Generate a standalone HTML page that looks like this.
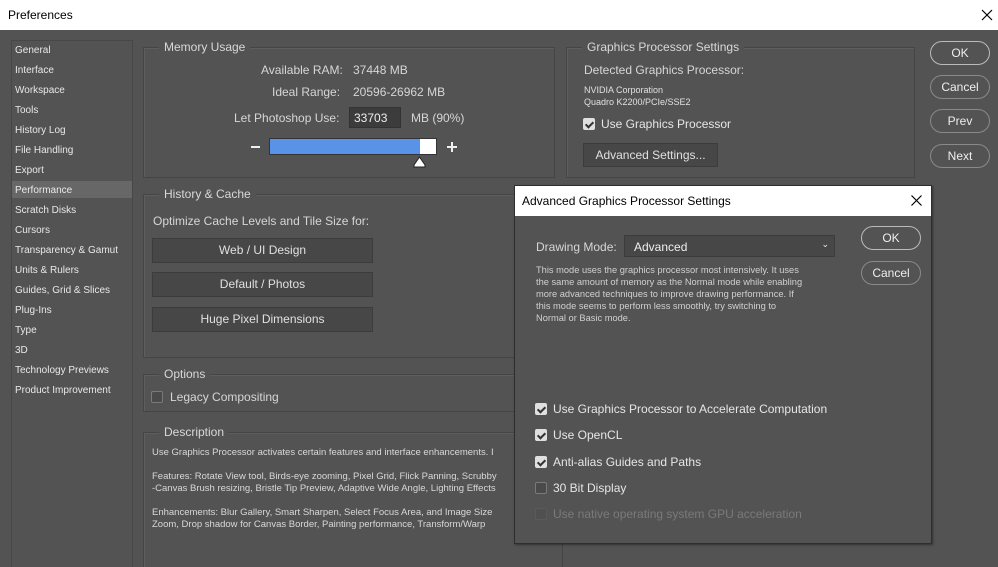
<!DOCTYPE html>
<html><head><style>
*{margin:0;padding:0;box-sizing:border-box}
html{width:998px;height:567px;overflow:hidden}
body{width:998px;height:567px;background:#535353;font-family:"Liberation Sans",sans-serif;color:#d6d6d6;position:relative;overflow:hidden}
.a{position:absolute;white-space:nowrap}
.tb{position:absolute;left:0;top:0;width:998px;height:30px;background:#fff;color:#000;font-size:12px}
.side{position:absolute;left:11px;top:40px;width:122px;height:530px;border:1px solid #474747;background:#535353}
.side div{position:absolute;left:3px;font-size:10px;color:#e8e8e8}
.grp{position:absolute;border:1px solid #454545;box-shadow:inset 1px 1px 0 #5e5e5e}
.lg{position:absolute;top:-8px;left:15px;background:#535353;padding:0 5px;font-size:12px;color:#d8d8d8}
.btn{position:absolute;width:60px;height:24px;border:1px solid #8a8a8a;border-radius:12px;text-align:center;line-height:22px;font-size:12px;color:#eee}
.gb{position:absolute;background:#474747;border:1px solid #3c3c3c;text-align:center;font-size:12px;color:#e0e0e0;line-height:22px}
.cb{position:absolute;width:12px;height:12px;border-radius:2px;border:1px solid #7a7a7a;background:#4a4a4a}
.cb.on{background:#e0e0e0;border-color:#e0e0e0}
.cb.on:after{content:"";position:absolute;left:3px;top:1px;width:3px;height:6px;border:solid #333;border-width:0 2px 2px 0;transform:rotate(45deg)}
</style></head><body>
<div class="tb"><span class="a" style="left:8px;top:8px">Preferences</span>
<svg class="a" style="left:981px;top:9px" width="12" height="12"><path d="M1 1L11 11M11 1L1 11" stroke="#000" stroke-width="1.2"/></svg></div>
<div class="side">
<div style="left:0;top:140px;width:120px;height:17px;background:#676767"></div>
<div style="top:4px">General</div><div style="top:24px">Interface</div><div style="top:44px">Workspace</div><div style="top:64px">Tools</div><div style="top:84px">History Log</div><div style="top:104px">File Handling</div><div style="top:124px">Export</div><div style="top:144px">Performance</div><div style="top:164px">Scratch Disks</div><div style="top:184px">Cursors</div><div style="top:204px">Transparency &amp; Gamut</div><div style="top:224px">Units &amp; Rulers</div><div style="top:244px">Guides, Grid &amp; Slices</div><div style="top:264px">Plug-Ins</div><div style="top:284px">Type</div><div style="top:304px">3D</div><div style="top:324px">Technology Previews</div><div style="top:344px">Product Improvement</div>
</div>

<div class="grp" style="left:143px;top:47px;width:412px;height:131px"><span class="lg">Memory Usage</span></div>
<span class="a" style="left:261px;top:63px;font-size:12px">Available RAM:</span><span class="a" style="left:353px;top:63px;font-size:12px">37448 MB</span>
<span class="a" style="left:272px;top:85px;font-size:12px">Ideal Range:</span><span class="a" style="left:353px;top:85px;font-size:12px">20596-26962 MB</span>
<span class="a" style="left:234px;top:111px;font-size:12px">Let Photoshop Use:</span>
<div class="a" style="left:349px;top:107px;width:52px;height:21px;background:#3c3c3c;border:1px solid #333;font-size:12px;padding:3px 4px;color:#eee">33703</div>
<span class="a" style="left:411px;top:111px;font-size:12px">MB (90%)</span>
<div class="a" style="left:251px;top:146px;width:9px;height:2px;background:#eee"></div>
<div class="a" style="left:269px;top:138px;width:168px;height:17px;background:#fff;border:1px solid #333"><div style="width:150px;height:15px;background:#5893e8"></div></div>
<div class="a" style="left:447px;top:146px;width:10px;height:2px;background:#eee"></div><div class="a" style="left:451px;top:142px;width:2px;height:10px;background:#eee"></div>
<svg class="a" style="left:413px;top:156px" width="13" height="12"><path d="M6.5 1L12 9V11H1V9Z" fill="#fff" stroke="#222"/></svg>

<div class="grp" style="left:566px;top:47px;width:349px;height:131px"><span class="lg">Graphics Processor Settings</span></div>
<span class="a" style="left:584px;top:63px;font-size:12px">Detected Graphics Processor:</span>
<span class="a" style="left:584px;top:85px;font-size:9px;color:#e0e0e0">NVIDIA Corporation</span>
<span class="a" style="left:584px;top:97px;font-size:9px;color:#e0e0e0">Quadro K2200/PCIe/SSE2</span>
<div class="cb on" style="left:583px;top:118px"></div><span class="a" style="left:601px;top:117px;font-size:12px;color:#e6e6e6">Use Graphics Processor</span>
<div class="gb" style="left:583px;top:143px;width:135px;height:24px">Advanced Settings...</div>

<div class="btn" style="left:930px;top:41px;border-color:#bbb">OK</div>
<div class="btn" style="left:930px;top:75px">Cancel</div>
<div class="btn" style="left:930px;top:109px">Prev</div>
<div class="btn" style="left:930px;top:144px">Next</div>

<div class="grp" style="left:143px;top:194px;width:420px;height:164px"><span class="lg">History &amp; Cache</span></div>
<span class="a" style="left:153px;top:214px;font-size:12px">Optimize Cache Levels and Tile Size for:</span>
<div class="gb" style="left:152px;top:238px;width:221px;height:25px">Web / UI Design</div>
<div class="gb" style="left:152px;top:272px;width:221px;height:25px">Default / Photos</div>
<div class="gb" style="left:152px;top:307px;width:221px;height:25px">Huge Pixel Dimensions</div>

<div class="grp" style="left:143px;top:374px;width:420px;height:38px"><span class="lg">Options</span></div>
<div class="cb" style="left:151px;top:391px"></div><span class="a" style="left:170px;top:390px;font-size:12px">Legacy Compositing</span>

<div class="grp" style="left:143px;top:432px;width:420px;height:140px"><span class="lg">Description</span></div>
<div class="a" style="left:152px;top:447px;font-size:9.5px;line-height:12px;color:#d8d8d8">Use Graphics Processor activates certain features and interface enhancements. I<br><br>Features: Rotate View tool, Birds-eye zooming, Pixel Grid, Flick Panning, Scrubby<br>-Canvas Brush resizing, Bristle Tip Preview, Adaptive Wide Angle, Lighting Effects<br><br>Enhancements: Blur Gallery, Smart Sharpen, Select Focus Area, and Image Size<br>Zoom, Drop shadow for Canvas Border, Painting performance, Transform/Warp</div>

<div class="a" style="left:514px;top:185px;width:418px;height:359px;background:#535353;border:1px solid #2e2e2e;box-shadow:1px 1px 2px rgba(0,0,0,.4)">
 <div style="position:absolute;left:0;top:0;width:416px;height:30px;background:#fff;color:#000;font-size:12px"><span class="a" style="left:7px;top:8px">Advanced Graphics Processor Settings</span>
 <svg class="a" style="left:396px;top:9px" width="11" height="11"><path d="M0.5 0.5L10.5 10.5M10.5 0.5L0.5 10.5" stroke="#000" stroke-width="1.2"/></svg></div>
 <span class="a" style="left:21px;top:54px;font-size:12px">Drawing Mode:</span>
 <div class="a" style="left:109px;top:49px;width:211px;height:22px;background:#474747;border:1px solid #3c3c3c;font-size:12px;color:#eee;padding:4px 9px">Advanced<span style="position:absolute;right:5px;top:3px;font-size:9px">⌄</span></div>
 <div class="a" style="left:21px;top:78px;font-size:9.3px;line-height:12px;color:#d0d0d0">This mode uses the graphics processor most intensively.  It uses<br>the same amount of memory as the Normal mode while enabling<br>more advanced techniques to improve drawing performance.  If<br>this mode seems to perform less smoothly, try switching to<br>Normal or Basic mode.</div>
 <div class="btn" style="left:346px;top:40px;border-color:#bbb">OK</div>
 <div class="btn" style="left:346px;top:75px">Cancel</div>
 <div class="cb on" style="left:20px;top:217px"></div><span class="a" style="left:38px;top:216px;font-size:12px;color:#e6e6e6">Use Graphics Processor to Accelerate Computation</span>
 <div class="cb on" style="left:20px;top:243px"></div><span class="a" style="left:38px;top:242px;font-size:12px;color:#e6e6e6">Use OpenCL</span>
 <div class="cb on" style="left:20px;top:270px"></div><span class="a" style="left:38px;top:269px;font-size:12px;color:#e6e6e6">Anti-alias Guides and Paths</span>
 <div class="cb" style="left:20px;top:296px"></div><span class="a" style="left:38px;top:295px;font-size:12px;color:#e6e6e6">30 Bit Display</span>
 <div class="cb" style="left:20px;top:322px;border-color:#5a5a5a;background:#505050"></div><span class="a" style="left:38px;top:321px;font-size:12px;color:#7a7a7a">Use native operating system GPU acceleration</span>
</div>
</body></html>
